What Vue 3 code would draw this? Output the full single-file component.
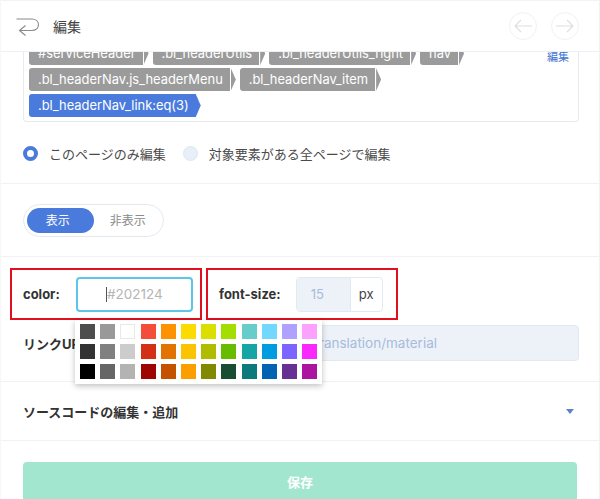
<template>
  <div class="panel">
    <header class="head">
      <svg class="back" width="24" height="20" viewBox="0 0 24 20" fill="none" stroke="#8a8a8a" stroke-width="1.1">
        <path d="M0.5 2H15.5C20 2 22.5 4.5 22.5 7.5C22.5 11 20 13.5 15.5 13.5H3.5" />
        <path d="M9.5 8.5L3.5 13.5L9.5 18.5" />
      </svg>
      <span class="head_title">編集</span>
      <div class="head_nav">
        <button v-for="d in navArrows" :key="d" class="circle">
          <svg width="20" height="16" viewBox="0 0 20 16" fill="none" stroke="#dedede" stroke-width="1.1">
            <path :d="d" />
          </svg>
        </button>
      </div>
    </header>

    <section class="selector_sec">
      <div class="selector_box">
        <a class="edit_link">編集</a>
        <div class="tags">
          <span
            v-for="tag in tags"
            :key="tag.name"
            class="tag"
            :class="{ active: tag.active }"
          >{{ tag.name }}</span>
        </div>
      </div>
      <div class="radios">
        <span class="radio on"></span>
        <span class="radio_label">このページのみ編集</span>
        <span class="radio"></span>
        <span class="radio_label">対象要素がある全ページで編集</span>
      </div>
    </section>

    <section class="toggle_sec">
      <div class="toggle">
        <span class="toggle_btn on">表示</span>
        <span class="toggle_btn">非表示</span>
      </div>
    </section>

    <section class="style_sec">
      <div class="style_row">
        <div class="outlined color_field">
          <label class="bold_label">color:</label>
          <div class="color_input"><i class="caret"></i>#202124</div>
        </div>
        <div class="outlined size_field">
          <label class="bold_label">font-size:</label>
          <div class="size_input">
            <span class="size_value">15</span>
            <span class="size_unit">px</span>
          </div>
        </div>
      </div>

      <div class="link_row">
        <label class="bold_label">リンクURL</label>
        <div class="link_input">https://www.example.co.jp/en/translation/material</div>
      </div>

      <div class="palette">
        <span
          v-for="c in colors"
          :key="c"
          class="swatch"
          :class="{ white: c === '#ffffff' }"
          :style="{ background: c }"
        ></span>
      </div>
    </section>

    <section class="source_sec">
      <span class="bold_label">ソースコードの編集・追加</span>
      <span class="triangle"></span>
    </section>

    <section class="save_sec">
      <button class="save">保存</button>
    </section>
  </div>
</template>

<script setup>
const navArrows = ["M19 8H2M8 2L2 8L8 14", "M1 8H18M12 2L18 8L12 14"];

const tags = [
  { name: "#serviceHeader" },
  { name: ".bl_headerUtils" },
  { name: ".bl_headerUtils_right" },
  { name: "nav" },
  { name: ".bl_headerNav.js_headerMenu" },
  { name: ".bl_headerNav_item" },
  { name: ".bl_headerNav_link:eq(3)", active: true },
];

const colors = [
  "#4d4d4d", "#999999", "#ffffff", "#f44e3b", "#fe9200", "#fcdc00",
  "#dbdf00", "#a4dd00", "#68ccca", "#73d8ff", "#aea1ff", "#fda1ff",
  "#333333", "#808080", "#cccccc", "#d33115", "#e27300", "#fcc400",
  "#b0bc00", "#68bc00", "#16a5a5", "#009ce0", "#7b64ff", "#fa28ff",
  "#000000", "#666666", "#b3b3b3", "#9f0500", "#c45100", "#fb9e00",
  "#808900", "#194d33", "#0c797d", "#0062b1", "#653294", "#ab149e",
];
</script>

<style>
html,
body {
  margin: 0;
  background: #fff;
}
</style>

<style scoped>
.panel {
  width: 600px;
  height: 499px;
  overflow: hidden;
  box-sizing: border-box;
  border-left: 1px solid #f6f7f8;
  border-right: 1px solid #f0f2f4;
  font-family: Inter, "Noto Sans CJK JP", sans-serif;
  color: #333;
  font-size: 13px;
}

.head {
  position: relative;
  z-index: 2;
  height: 52px;
  box-sizing: border-box;
  display: flex;
  align-items: center;
  padding: 0 20px 0 15px;
  background: #fff;
  border-top: 1px solid #f2f3f5;
  border-bottom: 1px solid #eef0f3;
}

.back {
  margin-top: 1px;
}

.head_title {
  margin-left: 13px;
  font-size: 14px;
  color: #444;
}

.head_nav {
  margin-left: auto;
  display: flex;
  gap: 14px;
}

.circle {
  width: 28px;
  height: 28px;
  padding: 0;
  display: flex;
  align-items: center;
  justify-content: center;
  background: #fff;
  border: 1px solid #f2f2f2;
  border-radius: 50%;
}

.selector_sec {
  height: 132px;
  box-sizing: border-box;
  border-bottom: 1px solid #f1f2f4;
}

.selector_box {
  position: relative;
  width: 556px;
  height: 70px;
  margin-left: 22px;
  box-sizing: border-box;
  padding: 0 5px;
  overflow: hidden;
  border: 1px solid #e6ebf2;
  border-top: none;
  border-radius: 0 0 4px 4px;
}

.edit_link {
  position: absolute;
  top: -3px;
  right: 9px;
  font-size: 11px;
  line-height: 16px;
  color: #3f74d0;
}

.tags {
  display: flex;
  flex-wrap: wrap;
  gap: 3px 10px;
  margin-top: -10px;
  width: 500px;
}

.tag {
  position: relative;
  height: 23px;
  line-height: 23px;
  padding: 0 7px 0 9px;
  background: #9b9b9b;
  border-radius: 3px 0 0 3px;
  color: #fff;
  font-size: 12.9px;
  white-space: nowrap;
}

.tag::after {
  content: "";
  position: absolute;
  top: 0;
  right: -6px;
  width: 5px;
  height: 23px;
  background: #9b9b9b;
  clip-path: polygon(0 0, 100% 50%, 0 100%);
}

.tag.active {
  background: #4a7bdc;
}

.tag.active::after {
  right: -5px;
  background: #4a7bdc;
}

.radios {
  display: flex;
  align-items: center;
  margin: 22px 0 0 22px;
  font-size: 13px;
  color: #4a4a4a;
}

.radio {
  width: 15px;
  height: 15px;
  box-sizing: border-box;
  border-radius: 50%;
  background: #e9eff8;
  border: 1px solid #dfe6f1;
}

.radio.on {
  background: #fff;
  border: 4px solid #4a7bdc;
}

.radio_label {
  margin: 0 17px 0 11px;
}

.toggle_sec {
  height: 73px;
  box-sizing: border-box;
  padding: 20px 0 0 22px;
  border-bottom: 1px solid #f1f2f4;
}

.toggle {
  width: 141px;
  height: 33px;
  box-sizing: border-box;
  display: flex;
  align-items: center;
  padding: 0 3px;
  border: 1px solid #e4e9f0;
  border-radius: 17px;
}

.toggle_btn {
  width: 67px;
  height: 25px;
  line-height: 25px;
  box-sizing: border-box;
  padding-left: 2px;
  text-align: center;
  border-radius: 13px;
  color: #8a8a8a;
  font-size: 12px;
}

.toggle_btn.on {
  padding: 0 5px 0 0;
  background: #4a7bdc;
  color: #fff;
}

.style_sec {
  position: relative;
  height: 125px;
  box-sizing: border-box;
  border-bottom: 1px solid #f1f2f4;
}

.style_row {
  display: flex;
  gap: 4px;
  padding: 11px 0 0 9px;
}

.outlined {
  width: 192px;
  height: 52px;
  box-sizing: border-box;
  display: flex;
  align-items: center;
  border: 2px solid #e0101f;
}

.bold_label {
  font-weight: 700;
  font-size: 13px;
  color: #333;
}

.color_field {
  padding-left: 11px;
}

.color_input {
  width: 117px;
  height: 35px;
  margin-left: 16px;
  box-sizing: border-box;
  display: flex;
  align-items: center;
  justify-content: center;
  border: 2px solid #5cc6ea;
  border-radius: 4px;
  color: #b5b5b5;
  font-size: 13.5px;
}

.caret {
  width: 1px;
  height: 15px;
  background: #555;
}

.size_field {
  padding-left: 11px;
}

.size_input {
  width: 87px;
  height: 35px;
  margin-left: 15px;
  box-sizing: border-box;
  display: flex;
  border: 1px solid #e3e9f2;
  border-radius: 4px;
  overflow: hidden;
}

.size_value {
  width: 54px;
  line-height: 33px;
  padding-left: 14px;
  box-sizing: border-box;
  background: #edf2f9;
  border-right: 1px solid #e3e9f2;
  color: #a7bbdc;
}

.size_unit {
  flex: 1;
  line-height: 33px;
  text-align: center;
  color: #444;
}

.link_row {
  display: flex;
  align-items: center;
  margin: 5px 20px 0 22px;
}

.link_input {
  flex: 1;
  height: 36px;
  line-height: 34px;
  margin-left: 14px;
  box-sizing: border-box;
  padding-left: 16px;
  background: #edf2f9;
  border: 1px solid #e3e9f2;
  border-radius: 4px;
  color: #a7bbdc;
  font-size: 13.5px;
  white-space: nowrap;
}

.palette {
  position: absolute;
  top: 63px;
  left: 74px;
  width: 247px;
  height: 64px;
  box-sizing: border-box;
  padding: 3.5px 5px;
  display: grid;
  grid-template-columns: repeat(12, 15px);
  grid-auto-rows: 15px;
  gap: 5px 5.2px;
  background: #fff;
  box-shadow: 0 2px 6px rgba(0, 0, 0, 0.25);
  z-index: 3;
}

.swatch.white {
  box-sizing: border-box;
  border: 1px solid #e8e8e8;
}

.source_sec {
  height: 59px;
  box-sizing: border-box;
  display: flex;
  align-items: center;
  justify-content: space-between;
  padding: 0 25px 0 22px;
  border-bottom: 1px solid #f1f2f4;
}

.triangle {
  width: 0;
  height: 0;
  border-left: 4px solid transparent;
  border-right: 4px solid transparent;
  border-top: 5px solid #5d83c4;
}

.save_sec {
  padding: 21px 22px 0;
}

.save {
  display: block;
  width: 554px;
  height: 38px;
  border: none;
  border-radius: 4px 4px 0 0;
  background: #a3e6d0;
  color: #fff;
  font-family: inherit;
  font-size: 13px;
  font-weight: 700;
}
</style>
